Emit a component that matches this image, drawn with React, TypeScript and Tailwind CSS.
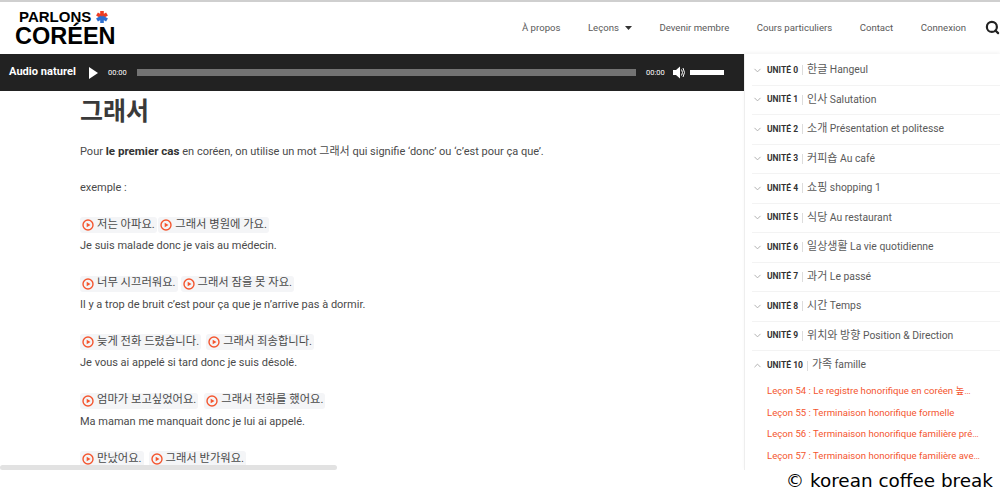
import { ChevronDown, ChevronUp, Search } from 'lucide-react'

const font = "font-['Roboto','Noto_Sans_CJK_KR',sans-serif]"

const navItems = ['À propos', 'Leçons', 'Devenir membre', 'Cours particuliers', 'Contact', 'Connexion']

const units = [
  { num: 'UNITÉ 0', ko: '한글', fr: 'Hangeul' },
  { num: 'UNITÉ 1', ko: '인사', fr: 'Salutation' },
  { num: 'UNITÉ 2', ko: '소개', fr: 'Présentation et politesse' },
  { num: 'UNITÉ 3', ko: '커피숍', fr: 'Au café' },
  { num: 'UNITÉ 4', ko: '쇼핑', fr: 'shopping 1' },
  { num: 'UNITÉ 5', ko: '식당', fr: 'Au restaurant' },
  { num: 'UNITÉ 6', ko: '일상생활', fr: 'La vie quotidienne' },
  { num: 'UNITÉ 7', ko: '과거', fr: 'Le passé' },
  { num: 'UNITÉ 8', ko: '시간', fr: 'Temps' },
  { num: 'UNITÉ 9', ko: '위치와 방향', fr: 'Position & Direction' },
]

const lessons = [
  'Leçon 54 : Le registre honorifique en coréen 높…',
  'Leçon 55 : Terminaison honorifique formelle',
  'Leçon 56 : Terminaison honorifique familière pré…',
  'Leçon 57 : Terminaison honorifique familière ave…',
]

const examples = [
  { ko: ['저는 아파요.', '그래서 병원에 가요.'], fr: 'Je suis malade donc je vais au médecin.', gap: 'gap-[1.5px]' },
  { ko: ['너무 시끄러워요.', '그래서 잠을 못 자요.'], fr: 'Il y a trop de bruit c’est pour ça que je n’arrive pas à dormir.', gap: 'gap-[3px]' },
  { ko: ['늦게 전화 드렸습니다.', '그래서 죄송합니다.'], fr: 'Je vous ai appelé si tard donc je suis désolé.', gap: 'gap-[5px]' },
  { ko: ['엄마가 보고싶었어요.', '그래서 전화를 했어요.'], fr: 'Ma maman me manquait donc je lui ai appelé.', gap: 'gap-[6px]' },
  { ko: ['만났어요.', '그래서 반가워요.'], fr: '', gap: 'gap-[5px]' },
]

function PlayChip({ text }: { text: string }) {
  return (
    <span className="inline-flex h-[16px] items-center gap-[3px] rounded-[3px] bg-[#f4f5f7] px-[2px] text-[11.3px] text-[#4a4a4a]">
      <svg width="12" height="12" viewBox="0 0 12 12" className="shrink-0">
        <circle cx="6" cy="6" r="5" fill="none" stroke="#f4562f" strokeWidth="1.4" />
        <path d="M4.700 3.700 L8.500 6 L4.700 8.300 Z" fill="#f4562f" />
      </svg>
      {text}
    </span>
  )
}

export default function App() {
  return (
    <div className={`flex h-[497px] w-[1000px] flex-col overflow-hidden bg-white ${font}`}>
      <header className="flex h-[54px] shrink-0 items-center border-t-2 border-[#cfcfcf] pl-[15px]">
        <div className="flex flex-col font-['Liberation_Sans',sans-serif] font-bold text-black">
          <div className="flex h-[14px] items-center gap-[4px] pl-[4px] text-[15px] leading-[14px]">
            PARLONS
            <svg width="14" height="14" viewBox="0 0 14 14">
              <path d="M7 7V1M7 7L2 4M7 7l5-3" stroke="#ee3d23" strokeWidth="3.600" />
              <path d="M7 7v6M7 7l-5 3M7 7l5 3" stroke="#2f6fd0" strokeWidth="3.600" />
            </svg>
          </div>
          <div className="h-[22px] text-[23.5px] leading-[25px]">CORÉEN</div>
        </div>
        <nav className="ml-auto flex items-center pt-[1px] text-[9.6px] text-[#5a5a5a]">
          {navItems.map((item, i) => (
            <span key={item} className={`flex items-center ${i === 0 ? '' : 'ml-[27.5px]'}`}>
              {item}
              {item === 'Leçons' && (
                <svg width="7" height="4" viewBox="0 0 7 4" className="ml-[6px]">
                  <path d="M0 0h7L3.500 4z" fill="#333" />
                </svg>
              )}
            </span>
          ))}
          <Search size={15} strokeWidth={3.5} className="mb-[2px] ml-[19px] text-[#222]" />
        </nav>
      </header>

      <div className="relative flex min-h-0 flex-1">
        <main className="flex w-[744px] shrink-0 flex-col overflow-hidden">
          <div className="flex h-[37px] shrink-0 items-center bg-[#222222] pl-[9px] text-white">
            <span className="w-[67px] whitespace-nowrap text-[11.1px] font-bold">Audio naturel</span>
            <svg width="9" height="12" viewBox="0 0 9 12" className="ml-[13px]">
              <path d="M0 0l9 6-9 6z" fill="#fff" />
            </svg>
            <span className="ml-[10px] w-[18px] text-[7.5px]">00:00</span>
            <div className="ml-[11px] h-[7px] w-[499px] bg-[#737373]" />
            <span className="ml-[10px] w-[19px] text-[7.5px]">00:00</span>
            <svg width="13" height="13" viewBox="0 0 13 13" className="ml-[8px]">
              <path d="M0 4h3l4-3.500v12L3 9H0z" fill="#fff" />
              <path d="M8.500 3.500q2 3 0 6M10 2q3 4.500 0 9" stroke="#fff" strokeWidth="1" fill="none" />
            </svg>
            <div className="ml-[4px] h-[5px] w-[34px] bg-white" />
          </div>

          <div className="pl-[80px] text-[11px] text-[#4a4a4a]">
            <h1 className="mt-[5px] text-[25px] font-bold leading-[32px] text-[#3a3a3a]">그래서</h1>
            <p className="mt-[14px] leading-[18px]">
              Pour <b className="text-[11.6px] font-bold text-[#333]">le premier cas</b> en coréen, on utilise un mot 그래서 qui signifie ‘donc’ ou ‘c’est pour ça que’.
            </p>
            <p className="mt-[18px] leading-[18px]">exemple :</p>
            {examples.map((ex) => (
              <div key={ex.ko[0]} className="mt-[17.5px] first-of-type:mt-[18px]">
                <div className={`flex h-[20px] items-center ${ex.gap}`}>
                  <PlayChip text={ex.ko[0]} />
                  <PlayChip text={ex.ko[1]} />
                </div>
                {ex.fr && <p className="leading-[21px]">{ex.fr}</p>}
              </div>
            ))}
          </div>
        </main>

        <aside className="flex min-w-0 flex-1 flex-col overflow-hidden border-l border-[#eeeeee] pl-[7px] pt-[2px] shadow-[0_-2px_3px_rgba(0,0,0,0.04)]">
          {units.map((u) => (
            <div key={u.num} className="flex h-[29.5px] shrink-0 items-center border-b border-[#f3f3f3] text-[#5a5a5a]">
              <ChevronDown size={11} className="text-[#aaa]" />
              <b className="ml-[4px] text-[8.5px] font-bold text-[#333]">{u.num}</b>
              <span className="mx-[4px] h-[10px] w-px bg-[#ddd]" />
              <span className="text-[10.35px]">
                <span className="text-[11px]">{u.ko}</span> {u.fr}
              </span>
            </div>
          ))}
          <div className="flex h-[29px] shrink-0 items-center text-[#5a5a5a]">
            <ChevronUp size={11} className="text-[#aaa]" />
            <b className="ml-[4px] text-[8.5px] font-bold text-[#333]">UNITÉ 10</b>
            <span className="mx-[4px] h-[10px] w-px bg-[#ddd]" />
            <span className="text-[10.35px]">
              <span className="text-[11px]">가족</span> famille
            </span>
          </div>
          {lessons.map((l) => (
            <div key={l} className="h-[21.7px] shrink-0 whitespace-nowrap pl-[15px] text-[9.6px] leading-[21.7px] text-[#f4562f]">
              {l}
            </div>
          ))}
        </aside>

        <div className="absolute bottom-0 left-0 h-[5px] w-[337px] rounded-full bg-[#e2e2e2]" />
      </div>

      <footer className="flex h-[27px] shrink-0 items-center justify-end pb-[4px] pr-[7px] font-['DejaVu_Sans',sans-serif] text-[18.4px] leading-none text-black">
        © korean coffee break
      </footer>
    </div>
  )
}
